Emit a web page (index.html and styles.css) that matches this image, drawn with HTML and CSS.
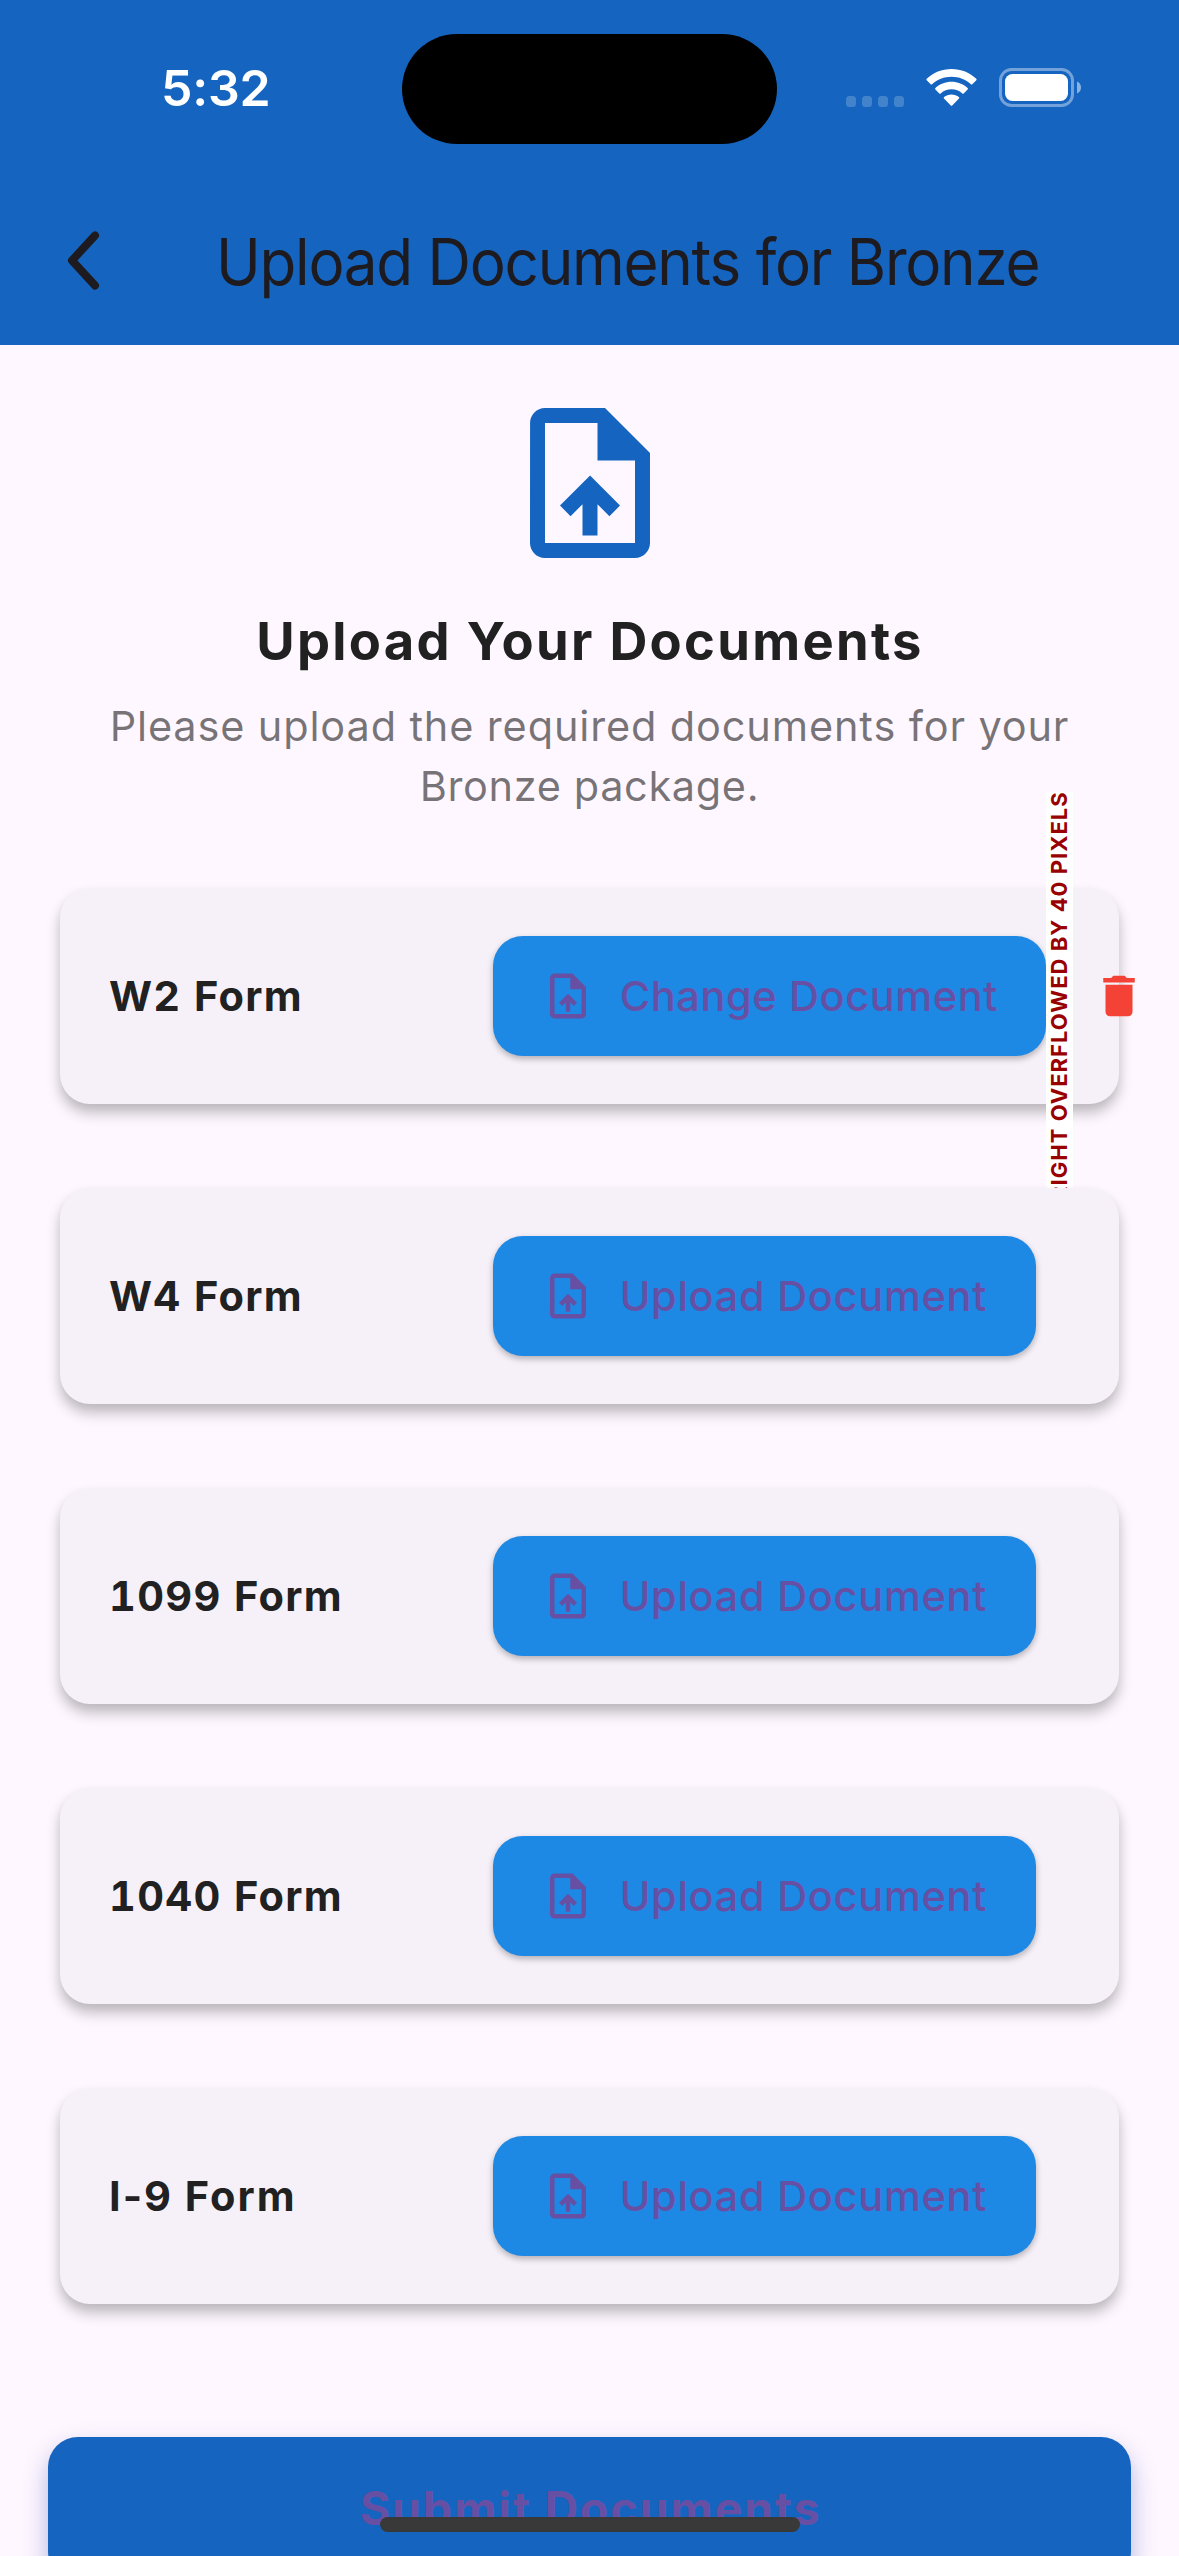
FILE: index.html
```html
<!DOCTYPE html>
<html lang="en">
<head>
<meta charset="utf-8">
<title>Upload Documents for Bronze</title>
<link rel="stylesheet" href="styles.css">
</head>
<body>
<svg class="defs" aria-hidden="true">
  <symbol id="upload-file" viewBox="0 0 24 24"><path d="M14 2H6c-1.1 0-1.99.9-1.99 2L4 20c0 1.1.89 2 1.99 2H18c1.1 0 2-.9 2-2V8l-6-6zm4 18H6V4h7v5h5v11zM8 15.01l1.41 1.41L11 14.84V19h2v-4.16l1.59 1.59L16 15.01 12.01 11 8 15.01z"/></symbol>
</svg>
<header class="app-bar">
  <div class="status-bar">
    <span class="clock">5:32</span>
    <span class="island"></span>
    <span class="indicators">
      <span class="signal"><i></i><i></i><i></i><i></i></span>
      <svg class="wifi" viewBox="0 0 51 37"><path d="M25.500 0C35 0 44 3.700 50.300 9.800Q51 10.500 50.300 11.300L46.300 15.200Q45.600 15.900 44.900 15.200C39.700 10.400 32.900 7.700 25.500 7.700S11.300 10.400 6.100 15.200Q5.400 15.900 4.700 15.200L.7 11.300Q0 10.500.7 9.800C7 3.700 16 0 25.500 0ZM25.500 12.800C31.600 12.800 37.300 15.100 41.600 19Q42.400 19.700 41.600 20.400L37.700 24.400Q37 25 36.300 24.400C33.400 21.800 29.600 20.300 25.500 20.300S17.600 21.800 14.700 24.400Q14 25 13.300 24.400L9.400 20.400Q8.600 19.700 9.400 19C13.700 15.100 19.400 12.800 25.500 12.800ZM25.500 25.500C28.300 25.500 30.900 26.500 32.900 28.100Q33.700 28.800 33 29.500L26.200 36.400Q25.500 37 24.800 36.400L18 29.500Q17.300 28.800 18.100 28.100C20.100 26.500 22.700 25.500 25.500 25.500Z"/></svg>
      <svg class="battery" viewBox="0 0 82 39"><rect class="shell" x="1.500" y="1.500" width="72" height="36" rx="11"/><rect x="6" y="6" width="63" height="27" rx="7.500"/><path class="nub" d="M78 13.500c2.500 1 4 3.300 4 6s-1.500 5-4 6z"/></svg>
    </span>
  </div>
  <div class="toolbar">
    <svg class="back" viewBox="0 0 36 60"><path d="M31 5.500 8 30.500 31 55.500"/></svg>
    <h1 class="title">Upload Documents for Bronze</h1>
  </div>
</header>
<main class="content">
  <svg class="hero-icon"><use href="#upload-file"/></svg>
  <h2 class="heading">Upload Your Documents</h2>
  <p class="lead">Please upload the required documents for your<br><span class="package">Bronze package.</span></p>
  <section class="cards">
    <article class="card">
      <span class="name">W2 Form</span>
      <button class="pick wide"><svg><use href="#upload-file"/></svg><span class="change">Change Document</span></button>
      <button class="remove" aria-label="Remove"><svg viewBox="0 0 24 24"><path d="M6 19c0 1.100.9 2 2 2h8c1.100 0 2-.9 2-2V7H6v12zM19 4h-3.500l-1-1h-5l-1 1H5v2h14V4z"/></svg></button>
      <span class="overflow-flag">RIGHT OVERFLOWED BY 40 PIXELS</span>
    </article>
    <article class="card"><span class="name">W4 Form</span><button class="pick"><svg><use href="#upload-file"/></svg><span>Upload Document</span></button></article>
    <article class="card"><span class="name">1099 Form</span><button class="pick"><svg><use href="#upload-file"/></svg><span>Upload Document</span></button></article>
    <article class="card"><span class="name">1040 Form</span><button class="pick"><svg><use href="#upload-file"/></svg><span>Upload Document</span></button></article>
    <article class="card"><span class="name loose">I-9 Form</span><button class="pick"><svg><use href="#upload-file"/></svg><span>Upload Document</span></button></article>
  </section>
  <button class="submit">Submit Documents</button>
</main>
<div class="home-indicator"></div>
</body>
</html>
```
FILE: styles.css
```css
* { box-sizing: border-box; margin: 0; padding: 0; }
body {
  position: relative;
  width: 1179px;
  height: 2556px;
  overflow: hidden;
  background: #fef7ff;
  font-family: Inter, "Liberation Sans", sans-serif;
  color: #212121;
}
svg { display: block; fill: currentColor; flex: none; }
button { border: 0; font: inherit; color: #6750a4; }
.defs { position: absolute; width: 0; height: 0; }

.app-bar { height: 345px; background: #1565c0; }
.status-bar { display: grid; grid-template-columns: 402px 375px 402px; height: 177px; color: #fff; }
.clock { padding: 57px 0 0 161px; font-size: 50px; line-height: 62px; font-weight: 600; letter-spacing: -0.200px; }
.island { margin-top: 34px; height: 110px; border-radius: 55px; background: #000; }
.indicators { display: flex; align-items: flex-start; padding: 68px 0 0 69px; }
.signal { display: flex; gap: 6px; margin: 28px 22px 0 0; }
.signal i { width: 10px; height: 11px; border-radius: 3.500px; background: rgba(255, 255, 255, .2); }
.wifi { width: 51px; height: 37px; margin: 1px 22px 0 0; }
.battery { width: 82px; height: 39px; }
.shell { fill: none; stroke: #fff; stroke-width: 3; opacity: .4; }
.nub { opacity: .5; }

.toolbar { display: flex; align-items: flex-start; height: 168px; padding-left: 64px; color: #1d1b20; }
.back { width: 36px; height: 60px; margin-top: 53px; fill: none; stroke: currentColor; stroke-width: 8; stroke-linecap: round; stroke-linejoin: round; }
.title { margin: 45px 0 0 116px; font-size: 64px; line-height: 80px; font-weight: 400; letter-spacing: -1.330px; white-space: nowrap; transform: scaleX(.94); transform-origin: left; }

.content { display: flex; flex-direction: column; align-items: center; }
.hero-icon { width: 180px; height: 180px; margin-top: 48px; color: #1565c0; }
.heading { margin: 36px 0 0 1px; font-size: 52.500px; line-height: 64px; font-weight: 700; letter-spacing: 2.280px; white-space: nowrap; }
.lead { margin-top: 23px; font-size: 41.500px; line-height: 60px; letter-spacing: .850px; color: rgba(0, 0, 0, .54); text-align: center; white-space: nowrap; }
.package { letter-spacing: .620px; }

.cards { display: grid; grid-template-columns: 1059px; gap: 84px; margin-top: 72px; }
.card {
  position: relative;
  display: flex;
  align-items: center;
  height: 216px;
  padding-left: 48px;
  border-radius: 30px;
  background: #f6f1f9;
  box-shadow: 0 9px 14px rgba(0, 0, 0, .24), 0 4px 10px rgba(0, 0, 0, .04);
}
.name { flex: none; width: 385px; padding-left: 1px; font-size: 41.500px; line-height: 60px; font-weight: 660; font-variant-numeric: tabular-nums; letter-spacing: 1.300px; }
.loose { font-variant-numeric: normal; letter-spacing: 2px; }
.pick {
  display: flex;
  align-items: center;
  gap: 24.700px;
  width: 543px;
  height: 120px;
  padding-left: 48px;
  flex: none;
  border-radius: 30px;
  background: #1e88e5;
  box-shadow: 0 3px 6px rgba(0, 0, 0, .28);
  font-size: 41.500px;
  font-weight: 500;
  letter-spacing: .700px;
  white-space: nowrap;
}
.pick svg { width: 54px; height: 54px; }
.wide { width: 553px; }
.change { letter-spacing: .600px; }
.remove { display: grid; place-items: center; width: 144px; height: 144px; flex: none; margin-left: 1px; background: none; color: #f44336; }
.remove svg { width: 54px; height: 54px; }
.overflow-flag {
  position: absolute;
  left: 986px;
  top: -96px;
  width: 27px;
  height: 409px;
  background: #fff;
  color: #900;
  font-size: 22px;
  line-height: 27px;
  font-weight: 700;
  letter-spacing: 1.030px;
  white-space: nowrap;
  writing-mode: vertical-rl;
  transform: rotate(180deg);
  text-align: end;
}

.submit {
  width: 1083px;
  height: 144px;
  margin-top: 133px;
  padding-bottom: 2px;
  border-radius: 30px;
  background: #1565c0;
  box-shadow: 0 12px 24px rgba(63, 81, 181, .4);
  font-size: 46.500px;
  font-weight: 700;
  letter-spacing: 1.850px;
  text-indent: 2px;
}
.home-indicator { position: absolute; left: 380px; top: 2517px; width: 420px; height: 15px; border-radius: 7.500px; background: #393939; }
```
